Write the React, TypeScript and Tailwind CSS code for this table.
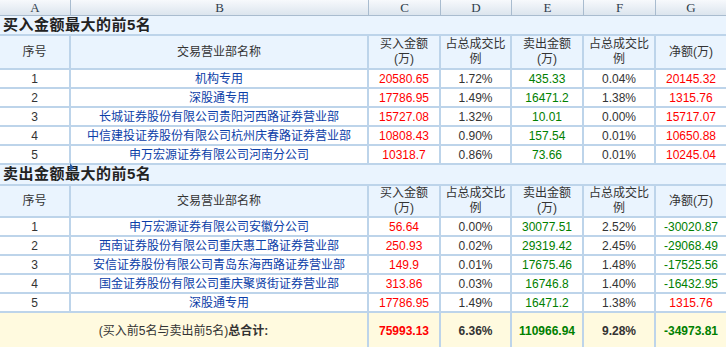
import React from 'react';

type Row = {
  no: string;
  name: string;
  buy: string;
  buyPct: string;
  sell: string;
  sellPct: string;
  net: string;
};

const buyRows: Row[] = [
  { no: '1', name: '机构专用', buy: '20580.65', buyPct: '1.72%', sell: '435.33', sellPct: '0.04%', net: '20145.32' },
  { no: '2', name: '深股通专用', buy: '17786.95', buyPct: '1.49%', sell: '16471.2', sellPct: '1.38%', net: '1315.76' },
  { no: '3', name: '长城证券股份有限公司贵阳河西路证券营业部', buy: '15727.08', buyPct: '1.32%', sell: '10.01', sellPct: '0.00%', net: '15717.07' },
  { no: '4', name: '中信建投证券股份有限公司杭州庆春路证券营业部', buy: '10808.43', buyPct: '0.90%', sell: '157.54', sellPct: '0.01%', net: '10650.88' },
  { no: '5', name: '申万宏源证券有限公司河南分公司', buy: '10318.7', buyPct: '0.86%', sell: '73.66', sellPct: '0.01%', net: '10245.04' },
];

const sellRows: Row[] = [
  { no: '1', name: '申万宏源证券有限公司安徽分公司', buy: '56.64', buyPct: '0.00%', sell: '30077.51', sellPct: '2.52%', net: '-30020.87' },
  { no: '2', name: '西南证券股份有限公司重庆惠工路证券营业部', buy: '250.93', buyPct: '0.02%', sell: '29319.42', sellPct: '2.45%', net: '-29068.49' },
  { no: '3', name: '安信证券股份有限公司青岛东海西路证券营业部', buy: '149.9', buyPct: '0.01%', sell: '17675.46', sellPct: '1.48%', net: '-17525.56' },
  { no: '4', name: '国金证券股份有限公司重庆聚贤街证券营业部', buy: '313.86', buyPct: '0.03%', sell: '16746.8', sellPct: '1.40%', net: '-16432.95' },
  { no: '5', name: '深股通专用', buy: '17786.95', buyPct: '1.49%', sell: '16471.2', sellPct: '1.38%', net: '1315.76' },
];

const widths = ['w-[71px]', 'w-[298px]', 'w-[72px]', 'w-[71px]', 'w-[72px]', 'w-[72px]', 'w-[70px]'];
const letters = ['A', 'B', 'C', 'D', 'E', 'F', 'G'];

const line = 'border-[#bdd4ea]';

const Cell: React.FC<{ i: number; className?: string; children?: React.ReactNode }> = ({ i, className = '', children }) => (
  <div
    className={`${widths[i]} shrink-0 flex items-center justify-center text-center ${i < 6 ? `border-r-2 ${line}` : ''} ${className}`}
  >
    {children}
  </div>
);

const HeaderRow: React.FC<{ h: string }> = ({ h }) => (
  <div className={`flex ${h} bg-[#eaf4fe] border-b-2 ${line} text-[#333] leading-[15px]`}>
    <Cell i={0}>序号</Cell>
    <Cell i={1}>交易营业部名称</Cell>
    <Cell i={2}>买入金额<br />(万)</Cell>
    <Cell i={3}>占总成交比<br />例</Cell>
    <Cell i={4}>卖出金额<br />(万)</Cell>
    <Cell i={5}>占总成交比<br />例</Cell>
    <Cell i={6}>净额(万)</Cell>
  </div>
);

const DataRow: React.FC<{ r: Row }> = ({ r }) => {
  const netColor = r.net.startsWith('-') ? 'text-[#008000]' : 'text-[#ff0000]';
  return (
    <div className={`flex h-[19px] bg-white border-b-2 ${line}`}>
      <Cell i={0} className="text-[#333]">{r.no}</Cell>
      <Cell i={1} className="text-[#0b3ea8]">{r.name}</Cell>
      <Cell i={2} className="text-[#ff0000]">{r.buy}</Cell>
      <Cell i={3} className="text-[#333]">{r.buyPct}</Cell>
      <Cell i={4} className="text-[#008000]">{r.sell}</Cell>
      <Cell i={5} className="text-[#333]">{r.sellPct}</Cell>
      <Cell i={6} className={netColor}>{r.net}</Cell>
    </div>
  );
};

const Title: React.FC<{ h: string; text: string; marker?: boolean }> = ({ h, text, marker }) => (
  <div className={`relative flex items-center ${h} bg-[#eaf4fe] border-b-2 ${line} pl-[3px] text-[15px] font-bold text-[#222] tracking-[0.5px]`}>
    {text}
    {marker && (
      <svg className="absolute left-[70px] top-[-2px]" width="4" height="8" viewBox="0 0 4 8">
        <polygon points="0,0 4,5 0,8" fill="#2b5fa8" />
      </svg>
    )}
  </div>
);

export default function App() {
  return (
    <div className="w-[726px] h-[347px] overflow-hidden bg-white text-[12px] font-['Liberation_Sans','Noto_Sans_CJK_SC',sans-serif]">
      {/* column letters */}
      <div className="flex h-[16px] bg-linear-to-b from-[#f7f9fc] to-[#dce5ee] border-b border-[#a9bccf] font-['Liberation_Serif',serif] text-[13px] text-[#2f3d4c]">
        {letters.map((l, i) => (
          <div key={l} className={`${widths[i]} shrink-0 flex items-center justify-center leading-none ${i < 6 ? 'border-r border-[#a9bccf]' : ''}`}>
            {l}
          </div>
        ))}
      </div>

      <Title h="h-[20px]" text="买入金额最大的前5名" />
      <HeaderRow h="h-[34px]" />
      {buyRows.map((r) => (
        <DataRow key={'b' + r.no} r={r} />
      ))}

      <Title h="h-[21px]" text="卖出金额最大的前5名" marker />
      <HeaderRow h="h-[32px]" />
      {sellRows.map((r) => (
        <DataRow key={'s' + r.no} r={r} />
      ))}

      {/* totals */}
      <div className="flex h-[35px] bg-[#fffadf] font-bold">
        <div className={`w-[369px] shrink-0 flex items-center justify-center border-r-2 ${line} text-[#333]`}>
          <span className="font-normal">(买入前5名与卖出前5名)</span>总合计:
        </div>
        <Cell i={2} className="text-[#ff0000]">75993.13</Cell>
        <Cell i={3} className="text-[#333]">6.36%</Cell>
        <Cell i={4} className="text-[#008000]">110966.94</Cell>
        <Cell i={5} className="text-[#333]">9.28%</Cell>
        <Cell i={6} className="text-[#008000]">-34973.81</Cell>
      </div>
    </div>
  );
}
